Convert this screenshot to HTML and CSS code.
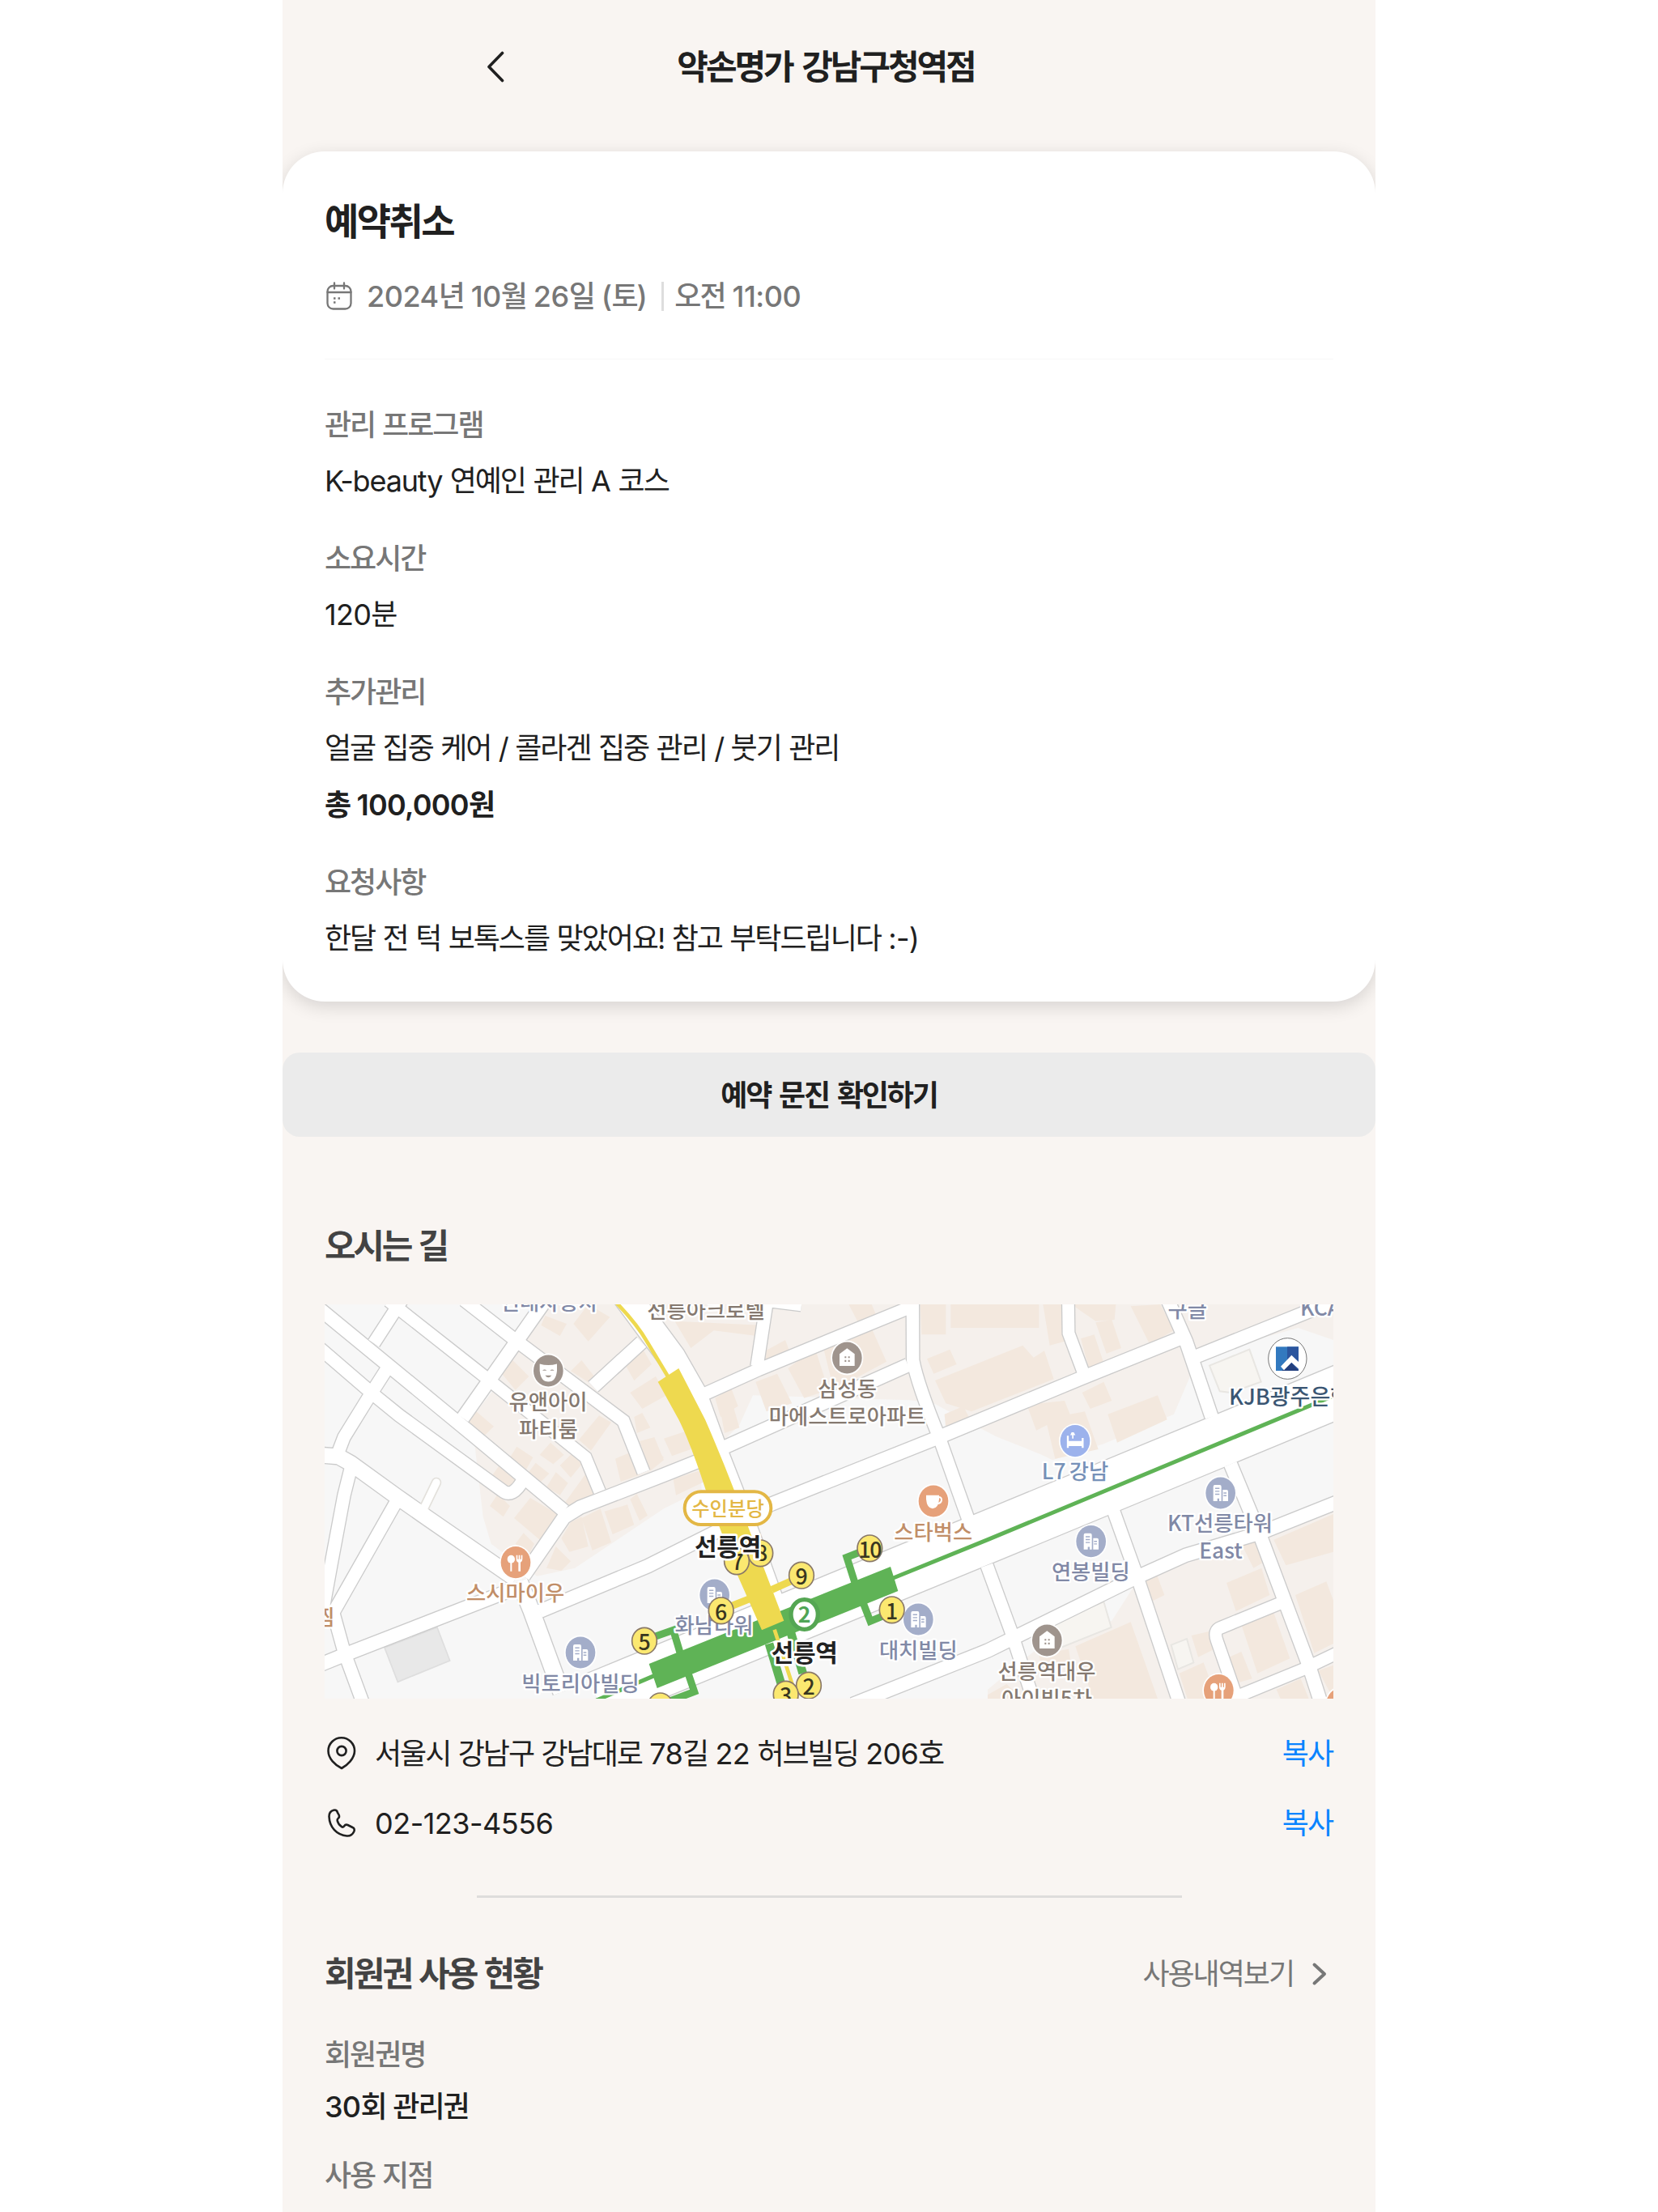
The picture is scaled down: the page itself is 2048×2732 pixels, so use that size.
FILE: index.html
```html
<!DOCTYPE html>
<html lang="ko">
<head>
<meta charset="utf-8">
<title>약손명가 강남구청역점</title>
<link rel="stylesheet" href="styles.css">
</head>
<body>
<main class="app">
  <header class="topbar">
    <svg class="back" viewBox="0 0 24 40" fill="none" stroke="currentColor" stroke-width="3.6" stroke-linecap="round" stroke-linejoin="round"><path d="M20.500 2.500 4 19.500l16.500 17"/></svg>
    <h1 class="topbar-title">약손명가 강남구청역점</h1>
  </header>

  <section class="card">
    <h2 class="card-title">예약취소</h2>
    <div class="when">
      <svg class="cal" viewBox="0 0 36 36" fill="none" stroke="currentColor" stroke-width="2.300"><rect x="3.500" y="5" width="29" height="28.500" rx="7"/><path d="M3.500 13h29M12 1.500v7M24 1.500v7" stroke-linecap="round"/><path d="M11 20.500h2.500M16.500 20.500h2.500M11 25.500h2.500" stroke-width="2.500"/></svg>
      <span class="day"><span class="en">2024</span>년 <span class="en">10</span>월 <span class="en">26</span>일 <span class="en">(</span>토<span class="en">)</span></span>
      <span class="bar"></span>
      <span>오전 <span class="en">11:00</span></span>
    </div>
    <dl class="fields">
      <dt>관리 프로그램</dt>
      <dd><span class="en word">K-beauty</span> 연예인 관리 <span class="en">A</span> 코스</dd>
      <dt>소요시간</dt>
      <dd><span class="en">120</span>분</dd>
      <dt>추가관리</dt>
      <dd>얼굴 집중 케어 / 콜라겐 집중 관리 / 붓기 관리</dd>
      <dd class="total">총 <span class="en">100,000</span>원</dd>
      <dt>요청사항</dt>
      <dd>한달 전 턱 보톡스를 맞았어요! 참고 부탁드립니다 <span class="en">:-)</span></dd>
    </dl>
  </section>

  <button class="check" type="button">예약 문진 확인하기</button>

  <section class="way">
    <h2 class="section-title">오시는 길</h2>
    <svg class="map" viewBox="33 33 3738 1461">
      <defs>
        <g id="roads">
          <path class="r50" d="M0 38 565 502 920 798"/>
          <path class="r48" d="M0 183 215 368 310 445 690 722Q730 755 770 680"/>
          <path class="r46" d="M270 20 628 302 1000 600 1052 727"/>
          <path class="r48" d="M550 18 730 158 1140 465 1215 655"/>
          <path class="r48" d="M320 15 215 177M265 270 194 381 105 525 80 590"/>
          <path class="r50" d="M850 20 545 454M1208 173 1028 338"/>
          <path class="r100" d="M1120 -40 1320 230 1400 370 1480 590 1570 820 1700 1180"/>
          <path class="r50" d="M770 1040 920 822 980 785 1290 665 1440 605"/>
          <path class="r50" d="M1515 562 2195 258M830 1170 1230 1003 1690 772 2290 533 2490 450 2840 305 3205 158"/>
          <path class="r48" d="M1430 370 1640 275 2200 45M1672 20 1635 262M1680 20 1800 35"/>
          <path class="r48" d="M2212 0 2213 240Q2230 330 2310 525L2420 835"/>
          <path class="r46" d="M2788 0 2790 140 2850 300"/>
          <path class="r50" d="M3150 0 3225 170 3320 450M3265 225 3800 10"/>
          <path class="r190" d="M3850 332 2490 895 1040 1490"/>
          <path class="r48" d="M2487 1000 2575 1240 2660 1500"/>
          <path class="r48" d="M2957 800 3045 1045 3200 1510"/>
          <path class="r50" d="M3390 625 3500 890 3680 1370 3725 1510"/>
          <path class="r50" d="M1990 1515 2490 1316 3040 1045 3225 962 3500 880 3800 760"/>
          <path class="r46" d="M3575 1140 3355 1230Q3325 1240 3340 1280L3420 1510M3380 1500 3660 1385 3800 1318"/>
          <path class="r56" d="M0 590 85 597 130 622 300 745 400 815 740 1050"/>
          <path class="r48" d="M130 640 105 740 60 980 20 1200M295 770 65 1175 105 1320 175 1510"/>
          <path class="r50" d="M0 1375 110 1330 740 1085"/>
          <path class="r60" d="M755 1060 800 1170 910 1470"/>
        </g>
        <g id="m-food"><circle class="halo" r="60"/><circle r="55" fill="#e6a17a"/><g fill="#fff"><circle cx="-17" cy="-11" r="14"/><path d="M-20-3h6v34h-6zM2-25h5v14h4v-14h5v14h4v-14h5v14q0 9-7 11v31h-8V0q-8-2-8-11z"/></g></g>
        <g id="m-home"><circle class="halo" r="60"/><circle r="55" fill="#9f948d"/><path d="M0-33 28-13v41h-56v-41z" fill="#fff"/><path d="M-9-5h6v6h-6zM4-5h6v6H4zM-9 8h6v6h-6zM4 8h6v6H4z" fill="#9f948d"/></g>
        <g id="m-tower"><circle class="halo" r="60"/><circle r="55" fill="#a3adc9"/><path d="M-27-22q0-6 6-6H-3q6 0 6 6v50h-8v-9h-7v9h-15zM8-11h14q6 0 6 6v33H8z" fill="#fff"/><path d="M-20-16H-4M-20-6H-4M-20 4H-4M11 0h11M11 9h11" stroke="#a3adc9" stroke-width="4"/></g>
        <g id="m-mask"><circle class="halo" r="60"/><circle r="55" fill="#9f948d"/><path d="M-32-24Q0-15 32-24V0Q28 38 0 38T-32 0z" fill="#fff"/><path d="M-22-1q8-7 16 0zM6-1q8-7 16 0zM-12 16q12 14 24 0z" fill="#9f948d"/></g>
        <g id="m-cup"><circle class="halo" r="60"/><circle r="55" fill="#e6a17a"/><path d="M-27-20h48v14q-3 32-24 32t-24-32z" fill="#fff"/><path d="M19-14q12 0 11 11T13 9" fill="none" stroke="#fff" stroke-width="6"/></g>
        <g id="m-bed"><circle class="halo" r="60"/><circle r="55" fill="#9cb2ec"/><path d="M-27-18v42M28-10v34M-27 14h55" stroke="#fff" stroke-width="7"/><path d="M-24 0h50v18h-50zM-18-20l5-10h8l6 10zM-11-20h5v12h-5z" fill="#fff"/></g>
      </defs>
      <rect x="33" y="33" width="3738" height="1461" fill="#f7f7f7"/>

      <g fill="#f5f0ec">
        <path d="M860 33 655 355 565 470 590 560 620 820 650 920 690 950 820 1040 960 1010 1290 790 1430 720 1420 560 1510 540 1570 480 1620 370 2200 388 2290 400 2520 522 2690 590 2730 610 2920 550 3180 440 3240 300 3210 180 3270 240 3500 160 3640 120 3771 165V33z"/>
        <path d="M3027 1085 2950 1205 2660 1320 2490 1460V1494H3771V780L3480 890 3060 1060z"/>
      </g>
      <g fill="#f3e8de">
        <path d="M850 75 930 105 905 150 835 110zM1010 33 1090 80 1010 170 955 105zM730 240 790 300 740 350 690 290zM985 240 1040 310 1015 325 945 280zM595 430 660 485 625 520 565 470zM1050 445 1095 470 1020 575 975 535zM745 560 805 600 780 645 720 600zM870 545 920 590 880 625 830 590zM950 585 990 620 945 675 905 630zM815 620 865 660 825 700 785 660zM890 655 935 695 905 740 855 710zM1005 655 1030 740 940 780 925 765zM680 630 745 680 720 720 655 665zM675 735 720 780 695 820 645 780zM795 750 900 812 830 905 735 825zM770 880 810 920 790 960 740 920zM945 840 985 820 1010 930 940 950 910 900zM1055 790 1095 915 1025 945 985 825zM1070 800 1155 775 1180 850 1100 885zM1190 735 1230 815 1200 835 1165 755zM890 930 945 985 910 1020 855 1010zM1110 605 1170 580 1200 665 1130 690zM1200 540 1255 525 1290 610 1240 650zM1180 450 1210 435 1240 490 1190 510zM1210 195 1245 255 1180 315 1140 245zM1260 300 1300 370 1210 420 1165 360z"/>
        <path d="M1330 95 1650 110 1635 150 1475 130 1390 195zM1480 380 1540 345 1565 410 1500 450zM1500 430 1550 420 1570 490 1515 510zM1630 320 1710 290 1765 400 1670 430zM1750 270 1850 195 1900 350 1810 380zM1880 190 2050 100 2115 245 1920 350zM1640 220 1740 165 1755 205 1660 245zM1975 33 2060 33 2080 80 2010 100zM2240 33 2335 33 2335 145 2245 145zM2353 33 2680 33 2680 120 2353 120zM2265 235 2350 200 2375 255 2290 290zM2295 315 2620 185 2660 230 2700 205 2735 310 2430 430 2335 400zM2330 440 2400 410 2425 460 2335 495zM1290 530 1380 500 1390 570 1320 595zM1325 680 1420 650 1440 690 1335 740zM1230 540 1290 600 1230 650z"/>
        <path d="M2695 33 2765 33 2775 170 2720 185zM2800 33 2965 33 2960 90 2890 95zM2890 100 2950 90 2985 195 2930 215zM2835 160 2885 145 2920 250 2865 270zM3020 40 3130 33 3180 130 3090 180zM2635 405 2775 390 2795 440 2850 430 2900 570 2740 605 2710 480 2670 500zM2840 360 2920 320 2950 390 2870 420zM2935 440 3120 370 3155 460 2970 545zM3070 1055 3115 1030 3145 1110 3085 1140zM2815 1300 3020 1210 3120 1494 2880 1494zM3375 1065 3505 1010 3535 1110 3410 1170zM3430 920 3480 895 3510 990 3475 1010zM3550 905 3771 810V950L3595 1000zM3630 1110 3745 1060 3771 1130V1290L3700 1325zM3430 1220 3550 1175 3610 1345 3490 1400zM3245 1260 3310 1245 3330 1310 3270 1340zM3375 1345 3430 1320 3470 1420 3400 1440zM3200 1400 3290 1360 3340 1494H3230zM3560 1460 3650 1420 3680 1494H3575zM3715 1390 3771 1370V1494zM2490 1480 2560 1440 2620 1494H2490zM2680 1330 2790 1310 2800 1370 2690 1380z"/>
      </g>
      <path d="M255 1305 450 1230 497 1353 304 1432z" fill="#e8e8e8" stroke="#dedede" stroke-width="5"/>
      <g fill="#f7f5f1" stroke="#e8e6e2" stroke-width="6"><path d="M3312 260 3460 200 3503 320 3390 360 3350 355zM2690 1230 2920 1135 2948 1230 2760 1305zM3170 1295 3228 1272 3253 1360 3195 1385z"/></g>

      <use href="#roads" class="casing"/>
      <path d="M400 790 447 693" stroke="#e3e1dc" stroke-width="38" stroke-linecap="round"/>
      <use href="#roads" class="surface"/>
      <path d="M396 798 447 693" stroke="#fff" stroke-width="28" stroke-linecap="round"/>

      <g fill="none" stroke="#5fb356">
        <path stroke-width="15" d="M2140 1047 2490 905 3771 372M1270 1402 1040 1500"/>
        <path stroke-width="27" d="M1998 1065 1968 970 2040 942M2027 1135 2055 1207 2120 1180M1352 1330 1325 1240 1240 1270M1380 1400 1403 1468 1280 1515"/>
        <path stroke-width="32" d="M1680 1290 1725 1440M1755 1230 1805 1400"/>
      </g>
      <path d="M1235 1365 2130 1005 2158 1095 1265 1455z" fill="#5fb356"/>
      <g fill="none" stroke="#eed94f">
        <path stroke-width="14" d="M1112 25Q1190 105 1230 175L1305 300M1700 1238 1785 1500"/>
        <path stroke-width="27" d="M1690 1090 1780 1050M1610 1123 1530 1155"/>
      </g>
      <path d="M1268 320 1345 270 1443 460Q1500 590 1550 720L1735 1205 1653 1240 1560 1030 1445 720Q1390 550 1345 460z" fill="#eed94f"/>

      <g class="pins">
        <use href="#m-mask" transform="translate(862 279) scale(1 1.07)"/>
        <use href="#m-food" transform="translate(741 989) scale(1 1.07)"/>
        <use href="#m-tower" transform="translate(981 1323) scale(1 1.07)"/>
        <use href="#m-home" transform="translate(1969 231) scale(1 1.07)"/>
        <use href="#m-cup" transform="translate(2289 762) scale(1 1.07)"/>
        <use href="#m-tower" transform="translate(1478 1110) scale(1 1.07)"/>
        <use href="#m-tower" transform="translate(2233 1200) scale(1 1.07)"/>
        <use href="#m-bed" transform="translate(2814 539) scale(1 1.07)"/>
        <use href="#m-tower" transform="translate(3353 732) scale(1 1.07)"/>
        <use href="#m-tower" transform="translate(2873 911) scale(1 1.07)"/>
        <use href="#m-home" transform="translate(2710 1278) scale(1 1.07)"/>
        <use href="#m-food" transform="translate(3346 1463) scale(1 1.07)"/>
        <use href="#m-food" transform="translate(3800 1513) scale(1 1.07)"/>
      </g>
      <ellipse cx="3601" cy="234" rx="71" ry="76" fill="#fff" stroke="#777" stroke-width="3"/>
      <path d="M3558 190h84v89h-84z" fill="#3279bf"/><path d="M3600 190h42v89h-42z" fill="#2b559e"/><path d="M3580 279 3615 250 3642 279z" fill="#233f7e"/>
      <path d="M3576 263 3616 221 3642 246V272L3616 248 3588 277z" fill="#fff"/>

      <g class="label">
        <g fill="#8189a6">
          <text x="865" y="55">현대자동차</text><text x="3230" y="80">구글</text><text x="3723" y="76">KCA</text>
          <text x="981" y="1466">빅토리아빌딩</text><text x="1476" y="1252">화남타워</text><text x="2233" y="1343">대치빌딩</text>
          <text x="3351" y="874">KT선릉타워</text><text x="3354" y="976">East</text><text x="2872" y="1053">연봉빌딩</text>
        </g>
        <g fill="#857970">
          <text x="1446" y="83">선릉아크로텔</text><text x="861" y="424">유앤아이</text><text x="862" y="525">파티룸</text>
          <text x="1970" y="374">삼성동</text><text x="1970" y="476">마에스트로아파트</text>
          <text x="2709" y="1422">선릉역대우</text><text x="2709" y="1524">아이빌5차</text>
        </g>
        <g fill="#c18e68"><text x="740" y="1132">스시마이우</text><text x="2288" y="906">스타벅스</text><text x="33" y="1221">찜</text></g>
        <text x="2814" y="681" fill="#7691b8" class="hotel">L7 강남</text>
        <text x="3384" y="405" class="bank">KJB광주은행</text>
      </g>

      <g class="exit">
        <g><ellipse cx="1648" cy="955" rx="46" ry="49"/><text x="1650" y="985">8</text></g>
        <g><ellipse cx="1560" cy="985" rx="46" ry="49"/><text x="1561" y="1018">7</text></g>
        <g><ellipse cx="2053" cy="937" rx="46" ry="49"/><text x="2053" y="971">10</text></g>
        <g><ellipse cx="1800" cy="1037" rx="46" ry="49"/><text x="1798" y="1071">9</text></g>
        <g><ellipse cx="1502" cy="1168" rx="46" ry="49"/><text x="1500" y="1202">6</text></g>
        <g><ellipse cx="1218" cy="1280" rx="46" ry="49"/><text x="1216" y="1314">5</text></g>
        <g><ellipse cx="2135" cy="1165" rx="46" ry="49"/><text x="2133" y="1199">1</text></g>
        <g><ellipse cx="1827" cy="1445" rx="46" ry="49"/><text x="1825" y="1479">2</text></g>
        <g><ellipse cx="1742" cy="1478" rx="46" ry="49"/><text x="1740" y="1512">3</text></g>
        <ellipse cx="1277" cy="1522" rx="46" ry="49"/>
      </g>
      <ellipse cx="1811" cy="1182" rx="50" ry="55" fill="#fff" stroke="#55a653" stroke-width="16"/>
      <text x="1811" y="1211" class="line-no">2</text>
      <rect x="1367" y="727" width="320" height="122" rx="61" fill="#fff" stroke="#e3b745" stroke-width="12"/>
      <text x="1527" y="817" class="line-name">수인분당</text>
      <g class="station"><text x="1527" y="962">선릉역</text><text x="1811" y="1356">선릉역</text></g>
    </svg>

    <div class="contact">
      <svg class="ico" viewBox="0 0 44 44" fill="none" stroke="currentColor" stroke-width="2.600"><path d="M22 40C14 36 5.500 28 5.500 18.500a16 16 0 0 1 32.500 0C38 28 29 36 22 40z" stroke-linejoin="round"/><circle cx="22" cy="18.500" r="5.600"/></svg>
      <span class="addr">서울시 강남구 강남대로 <span class="en">78</span>길 <span class="en">22</span> 허브빌딩 <span class="en">206</span>호</span>
      <a class="copy">복사</a>
    </div>
    <div class="contact">
      <svg class="ico" viewBox="0 0 44 44" fill="none" stroke="currentColor" stroke-width="2.600" stroke-linejoin="round"><path d="M16.800 8.300C16.200 5.700 14.500 5.200 12 5.700 8.500 6.500 6.500 9.500 6.500 13.500 7 27 16 36.500 28.500 37.500c3.500.2 7-1.500 8.800-5.500 1-2.500.2-4.200-1.800-5L29.500 24c-2-.8-3.300-.2-4.500 1.500-.8 1.200-1.800 1.500-3 .6-2.800-1.800-4.600-4.300-5.300-7.300-.3-1.300 0-2.300 1.100-3.100 1.100-.8 1.500-1.900 1-3.700z"/></svg>
      <span class="addr en tel">02-123-4556</span>
      <a class="copy">복사</a>
    </div>
  </section>

  <hr class="rule">

  <section class="pass">
    <div class="pass-head">
      <h2 class="section-title">회원권 사용 현황</h2>
      <a class="more">사용내역보기<svg viewBox="0 0 20 32" fill="none" stroke="currentColor" stroke-width="4" stroke-linecap="round" stroke-linejoin="round"><path d="M3.500 4.500 16 16 3.500 27.500"/></svg></a>
    </div>
    <dl class="pass-list">
      <dt>회원권명</dt>
      <dd><span class="en">30</span>회 관리권</dd>
      <dt>사용 지점</dt>
    </dl>
  </section>
</main>
</body>
</html>
```
FILE: styles.css
```css
* { box-sizing: border-box; margin: 0; padding: 0; }
body {
  background: #fff;
  color: #202020;
  font: 400 36px/50px Inter, "Noto Sans CJK KR", sans-serif;
  letter-spacing: -0.056em;
  word-spacing: 1.3px;
}
.en { letter-spacing: -0.02em; }
.word { letter-spacing: -0.032em; }
.tel { letter-spacing: -0.014em; }
.app {
  width: 1350px;
  height: 2732px;
  margin-left: 349px;
  overflow: hidden;
  background: #f9f5f2;
}
.topbar {
  display: grid;
  grid-template-columns: 250px 1fr 250px;
  align-items: center;
  height: 187px;
  padding: 1px 0 23px;
}
.back { width: 24px; height: 40px; justify-self: end; margin-right: -25px; }
.topbar-title { font-size: 42px; font-weight: 600; text-align: center; letter-spacing: -0.073em; word-spacing: 4px; padding-right: 8px; }

.card {
  height: 1050px;
  padding: 56px 52px 0;
  border-radius: 52px;
  background: #fff;
  box-shadow: 0 6px 22px rgba(0, 0, 0, .14);
}
.card-title { font-size: 46px; line-height: 60px; font-weight: 700; letter-spacing: -0.056em; }
.when {
  display: flex;
  align-items: center;
  margin-top: 38px;
  padding-bottom: 52px;
  height: 103px;
  border-bottom: 1px solid #f7f7f7;
  color: #777;
  font-weight: 500;
}
.when .en { letter-spacing: -0.014em; }
.cal { width: 36px; height: 36px; margin-right: 16px; }
.bar { width: 3px; height: 36px; margin: 0 13px 0 18px; background: #ddd; }
.fields { margin-top: 55px; }
dt { color: #777; font-weight: 500; line-height: 52px; }
.fields dt { margin-top: 44px; }
.fields dd { margin-top: 20px; }
.fields dt + dd { margin-top: 18px; }
.fields dd + dt { margin-top: 45px; }
.fields .total { font-weight: 600; }

.check {
  display: block;
  width: 100%;
  height: 104px;
  margin-top: 63px;
  padding-top: 2px;
  border: 0;
  border-radius: 21px;
  background: #ebebeb;
  color: #202020;
  font: inherit;
  font-weight: 600;
  letter-spacing: -0.06em;
  word-spacing: 3px;
}

.way { padding: 110px 52px 0; }
.section-title { font-size: 42px; font-weight: 700; color: #434343; letter-spacing: -0.07em; word-spacing: 2px; }
.way .section-title { font-weight: 600; letter-spacing: -0.078em; }
.map { display: block; width: 1246px; height: 487px; margin: 47px 0 43px; }
.contact { display: flex; align-items: center; height: 50px; }
.contact + .contact { margin-top: 36px; }
.ico { width: 44px; height: 44px; margin: 0 19px 0 -1px; }
.addr { flex: 1; }
.copy { color: #0a84ff; padding-right: 1px; }

.rule { width: 871px; height: 3px; margin: 64px auto 0; border: 0; background: #dedddc; }
.pass { padding: 68px 52px 0; }
.pass-head { display: flex; justify-content: space-between; align-items: center; height: 52px; }
.more { display: flex; align-items: center; color: #777; }
.more svg { width: 20px; height: 32px; margin: 0 7px 0 22px; }
.pass-list { margin-top: 48px; }
.pass-list dd { margin: 13px 0 34px; font-weight: 500; }

/* map */
.casing { --case: 8px; stroke: #cbcbcb; fill: none; }
.surface { --case: 0px; stroke: #fff; fill: none; }
.r46 { stroke-width: calc(44px + var(--case)); }
.r48 { stroke-width: calc(46px + var(--case)); }
.r50 { stroke-width: calc(49px + var(--case)); }
.r56 { stroke-width: calc(56px + var(--case)); }
.r60 { stroke-width: calc(60px + var(--case)); }
.r100 { stroke-width: calc(100px + var(--case)); }
.r190 { stroke-width: calc(190px + var(--case)); }
.halo { fill: #fff; }
.map text { font-family: "Noto Sans CJK KR", sans-serif; text-anchor: middle; letter-spacing: 0; word-spacing: 0; paint-order: stroke; stroke-linejoin: round; }
.label text { font-size: 79px; font-weight: 500; stroke: #fff; stroke-width: 14px; }
.label .hotel { word-spacing: -9px; }
.label .bank { font-size: 81px; fill: #3b5673; text-anchor: start; }
.exit ellipse { fill: #fbe870; stroke: #8a7968; stroke-width: 5px; }
.exit text { font-size: 80px; font-weight: 500; fill: #38361f; letter-spacing: -4px; }
.map .line-no { font-size: 80px; font-weight: 700; fill: #4fa556; }
.map .line-name { font-size: 73px; font-weight: 500; fill: #e3b745; }
.station text { font-size: 90px; font-weight: 700; fill: #222; stroke: #fff; stroke-width: 16px; letter-spacing: -1px; }
```
